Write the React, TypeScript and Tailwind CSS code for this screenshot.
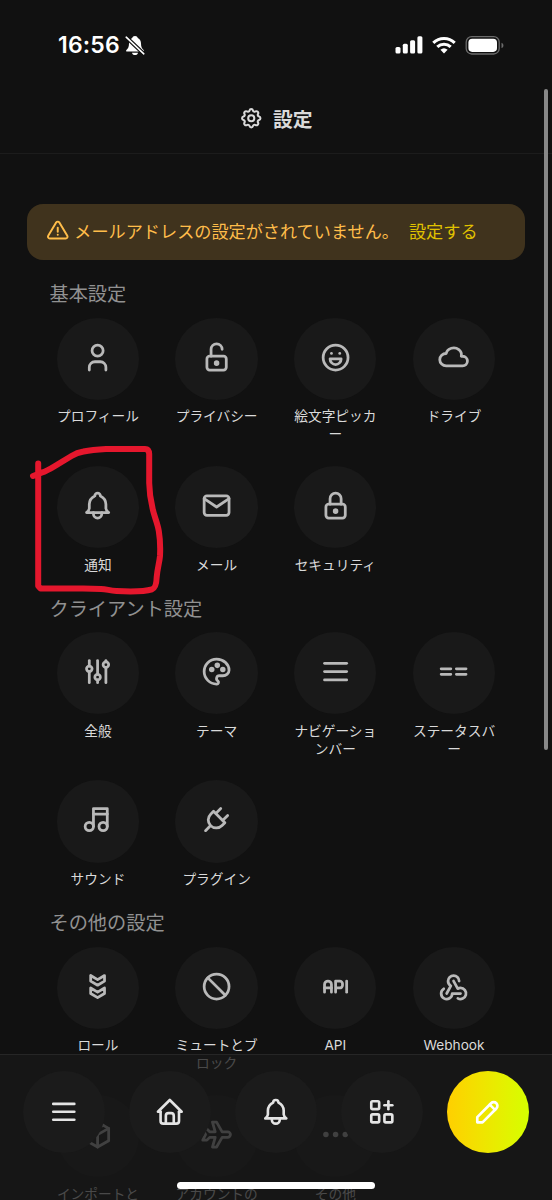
import React from "react";
import {
  TbAdjustments,
  TbAlertTriangle,
  TbApi,
  TbApps,
  TbBadges,
  TbBan,
  TbBell,
  TbCloud,
  TbDots,
  TbHome,
  TbLock,
  TbLockOpen,
  TbMail,
  TbMenu2,
  TbMoodHappy,
  TbMusic,
  TbPackage,
  TbPalette,
  TbPencil,
  TbPlane,
  TbPlug,
  TbSettings,
  TbUser,
  TbWebhook,
} from "react-icons/tb";

type IconType = React.ComponentType<{ className?: string }>;

type Item = { label: string; icon: IconType };

type Section = { title: string; items: Item[] };

function StatusBarIcon({ className }: { className?: string }) {
  return (
    <svg
      className={className}
      viewBox="0 0 24 24"
      fill="none"
      stroke="currentColor"
      strokeWidth="2"
      strokeLinecap="round"
    >
      <path d="M3 10h7M14 10h7M3 14h7M14 14h7" />
    </svg>
  );
}

const sections: Section[] = [
  {
    title: "基本設定",
    items: [
      { label: "プロフィール", icon: TbUser },
      { label: "プライバシー", icon: TbLockOpen },
      { label: "絵文字ピッカ\nー", icon: TbMoodHappy },
      { label: "ドライブ", icon: TbCloud },
      { label: "通知", icon: TbBell },
      { label: "メール", icon: TbMail },
      { label: "セキュリティ", icon: TbLock },
    ],
  },
  {
    title: "クライアント設定",
    items: [
      { label: "全般", icon: TbAdjustments },
      { label: "テーマ", icon: TbPalette },
      { label: "ナビゲーショ\nンバー", icon: TbMenu2 },
      { label: "ステータスバ\nー", icon: StatusBarIcon },
      { label: "サウンド", icon: TbMusic },
      { label: "プラグイン", icon: TbPlug },
    ],
  },
  {
    title: "その他の設定",
    items: [
      { label: "ロール", icon: TbBadges },
      { label: "ミュートとブ\nロック", icon: TbBan },
      { label: "API", icon: TbApi },
      { label: "Webhook", icon: TbWebhook },
      { label: "インポートと", icon: TbPackage },
      { label: "アカウントの", icon: TbPlane },
      { label: "その他", icon: TbDots },
    ],
  },
];

const navIcons: IconType[] = [TbMenu2, TbHome, TbBell, TbApps];

function PhoneStatus() {
  return (
    <div className="flex h-[89px] items-center pl-[58px] pr-[48px] pt-px text-white">
      <span className="font-['Inter'] text-[23px] font-semibold leading-none tracking-[0.2px]">
        16:56
      </span>
      <svg className="ml-[5px] h-[21px] w-[20px]" viewBox="0 0 20 21">
        <path
          d="M10 1c-1.500 0-2.500 .9-2.800 2.100C5 4.100 4 6 4 8.500c0 3.500-1 4.800-2.400 6.200-.9 1 -.6 1.800 .5 1.800h15.800c1.100 0 1.400-.8 .5-1.800C17 13.300 16 12 16 8.500c0-2.500-1-4.400-3.200-5.400C12.500 1.900 11.500 1 10 1z"
          fill="currentColor"
        />
        <path d="M7 17.800h6c-.3 1.400-1.400 2.300-3 2.300s-2.700-.9-3-2.300z" fill="currentColor" />
        <path d="M1 2l18 17" stroke="#111111" strokeWidth="3.800" />
        <path d="M1.200 2.200l17.600 16.600" stroke="currentColor" strokeWidth="1.600" strokeLinecap="round" />
      </svg>
      <div className="ml-auto flex items-center">
        <svg className="h-[18px] w-[28px]" viewBox="0 0 28 18" fill="currentColor">
          <rect x="0.500" y="11" width="5" height="6.500" rx="1.500" />
          <rect x="7.800" y="7.700" width="5" height="9.800" rx="1.500" />
          <rect x="15.100" y="4.200" width="5" height="13.300" rx="1.500" />
          <rect x="22.400" y="0.300" width="5" height="17.200" rx="1.500" />
        </svg>
        <svg className="ml-[9px] h-[18px] w-[24px]" viewBox="0 0 24 18" fill="none" stroke="currentColor" strokeWidth="3.100">
          <path d="M1.300 6.800a15.500 15.500 0 0 1 21.400 0" />
          <path d="M5.300 10.900a9.800 9.800 0 0 1 13.400 0" />
          <path d="M12 17.500l-3.600-3.700a5.400 5.400 0 0 1 7.200 0z" fill="currentColor" stroke="none" />
        </svg>
        <svg className="ml-[9px] h-[19px] w-[39px]" viewBox="0 0 39 19">
          <rect x="1.200" y="0.700" width="33" height="17.300" rx="5.500" fill="none" stroke="#6b6b6b" strokeWidth="1.300" />
          <rect x="3.400" y="2.800" width="28.600" height="13.100" rx="3.800" fill="#ffffff" />
          <path d="M36.500 6.700c1.200 .5 1.900 1.400 1.900 2.700s-.7 2.200-1.900 2.700z" fill="#6b6b6b" />
        </svg>
      </div>
    </div>
  );
}

function SettingItem({ label, icon: Icon }: Item) {
  return (
    <div className="flex h-[126px] flex-col items-center">
      <div className="flex h-[82.300px] w-[82.300px] shrink-0 items-center justify-center rounded-full bg-[#191919] pb-[3px]">
        <Icon className="h-[33.200px] w-[33.200px] text-[#b9b9b9]" />
      </div>
      <div className="mt-[7.600px] whitespace-pre text-center text-[13.700px] leading-[18px] text-[#dadada]">
        {label}
      </div>
    </div>
  );
}

export default function App() {
  return (
    <div className="relative h-[1200px] w-[552px] overflow-hidden bg-[#111111] font-['Inter','Noto_Sans_CJK_JP',sans-serif]">
      <PhoneStatus />
      <header className="flex h-[65px] items-center justify-center border-b border-[#1c1c1c] pb-[6px] text-[#dadada]">
        <TbSettings className="h-[24.500px] w-[24.500px]" />
        <h1 className="ml-[9px] mt-[6px] text-[19.800px] font-bold leading-none">設定</h1>
      </header>

      <main className="pt-[49.700px]">
        <div className="mx-[27.300px] flex h-[56.300px] items-center rounded-2xl bg-[#40331d] pl-[19px] text-[17.150px] text-[#ffbd4a]">
          <TbAlertTriangle className="mb-[2px] h-[23.500px] w-[23.500px] shrink-0" />
          <span className="ml-[4.500px] whitespace-nowrap">メールアドレスの設定がされていません。</span>
          <span className="ml-[10px] whitespace-nowrap text-[#e0c200]">設定する</span>
        </div>

        <div className="mt-[20.400px] flex flex-col gap-[10px]">
          {sections.map((section) => (
            <section key={section.title} className="h-[304.500px]">
              <h2 className="ml-[49.500px] h-[28px] whitespace-nowrap text-[19.200px] font-normal leading-[28px] text-[#919191]">
                {section.title}
              </h2>
              <div className="ml-[56.800px] mt-[9.200px] grid w-[438.400px] grid-cols-[82.300px_82.300px_82.300px_82.300px] justify-between gap-y-[22.200px]">
                {section.items.map((item) => (
                  <SettingItem key={item.label} {...item} />
                ))}
              </div>
            </section>
          ))}
        </div>
      </main>

      <nav className="absolute inset-x-0 bottom-0 flex h-[146px] items-start justify-between border-t border-[#262626] bg-[#181818]/75 px-[23px] pt-[15.700px]">
        {navIcons.map((Icon, i) => (
          <button
            key={i}
            className="flex h-[82.300px] w-[82.300px] items-center justify-center rounded-full bg-[#1b1b1b] text-[#e4e4e4]"
          >
            <Icon className="h-[31.600px] w-[31.600px]" />
          </button>
        ))}
        <button className="flex h-[82.300px] w-[82.300px] items-center justify-center rounded-full bg-linear-to-r from-[#ffcf00] to-[#d5ff00] text-white">
          <TbPencil className="h-[31.600px] w-[31.600px]" />
        </button>
      </nav>

      <div className="absolute bottom-[11px] left-[177px] h-[7px] w-[198px] rounded-full bg-white" />
      <div className="absolute right-[4px] top-[89px] h-[661px] w-[4px] rounded-full bg-[#888888]" />

      {/* hand-drawn marker around the notification entry */}
      <svg
        className="pointer-events-none absolute left-0 top-[430px] h-[180px] w-[180px]"
        viewBox="0 430 180 180"
        fill="none"
        stroke="#e5172d"
        strokeWidth="6"
        strokeLinecap="round"
        strokeLinejoin="round"
      >
        <path d="M33 476L41.500 472.700C47 471 51 468.500 55 466L71.500 456Q77 452.700 83.500 451.500Q92 449.500 106 448.900H145Q149 449 149.200 454V483C149.500 495 151 502 152.500 508C154 516 157.500 523 158.800 531C160.300 540 160.400 548 160 556C159.500 562 157.500 568 156.700 577Q156.300 588 152 589.300C144 591.700 126 591.500 116.500 591C109 590.500 107 589.200 101 589L83 588.400H40.500L38.200 586V463.500" />
      </svg>
    </div>
  );
}
